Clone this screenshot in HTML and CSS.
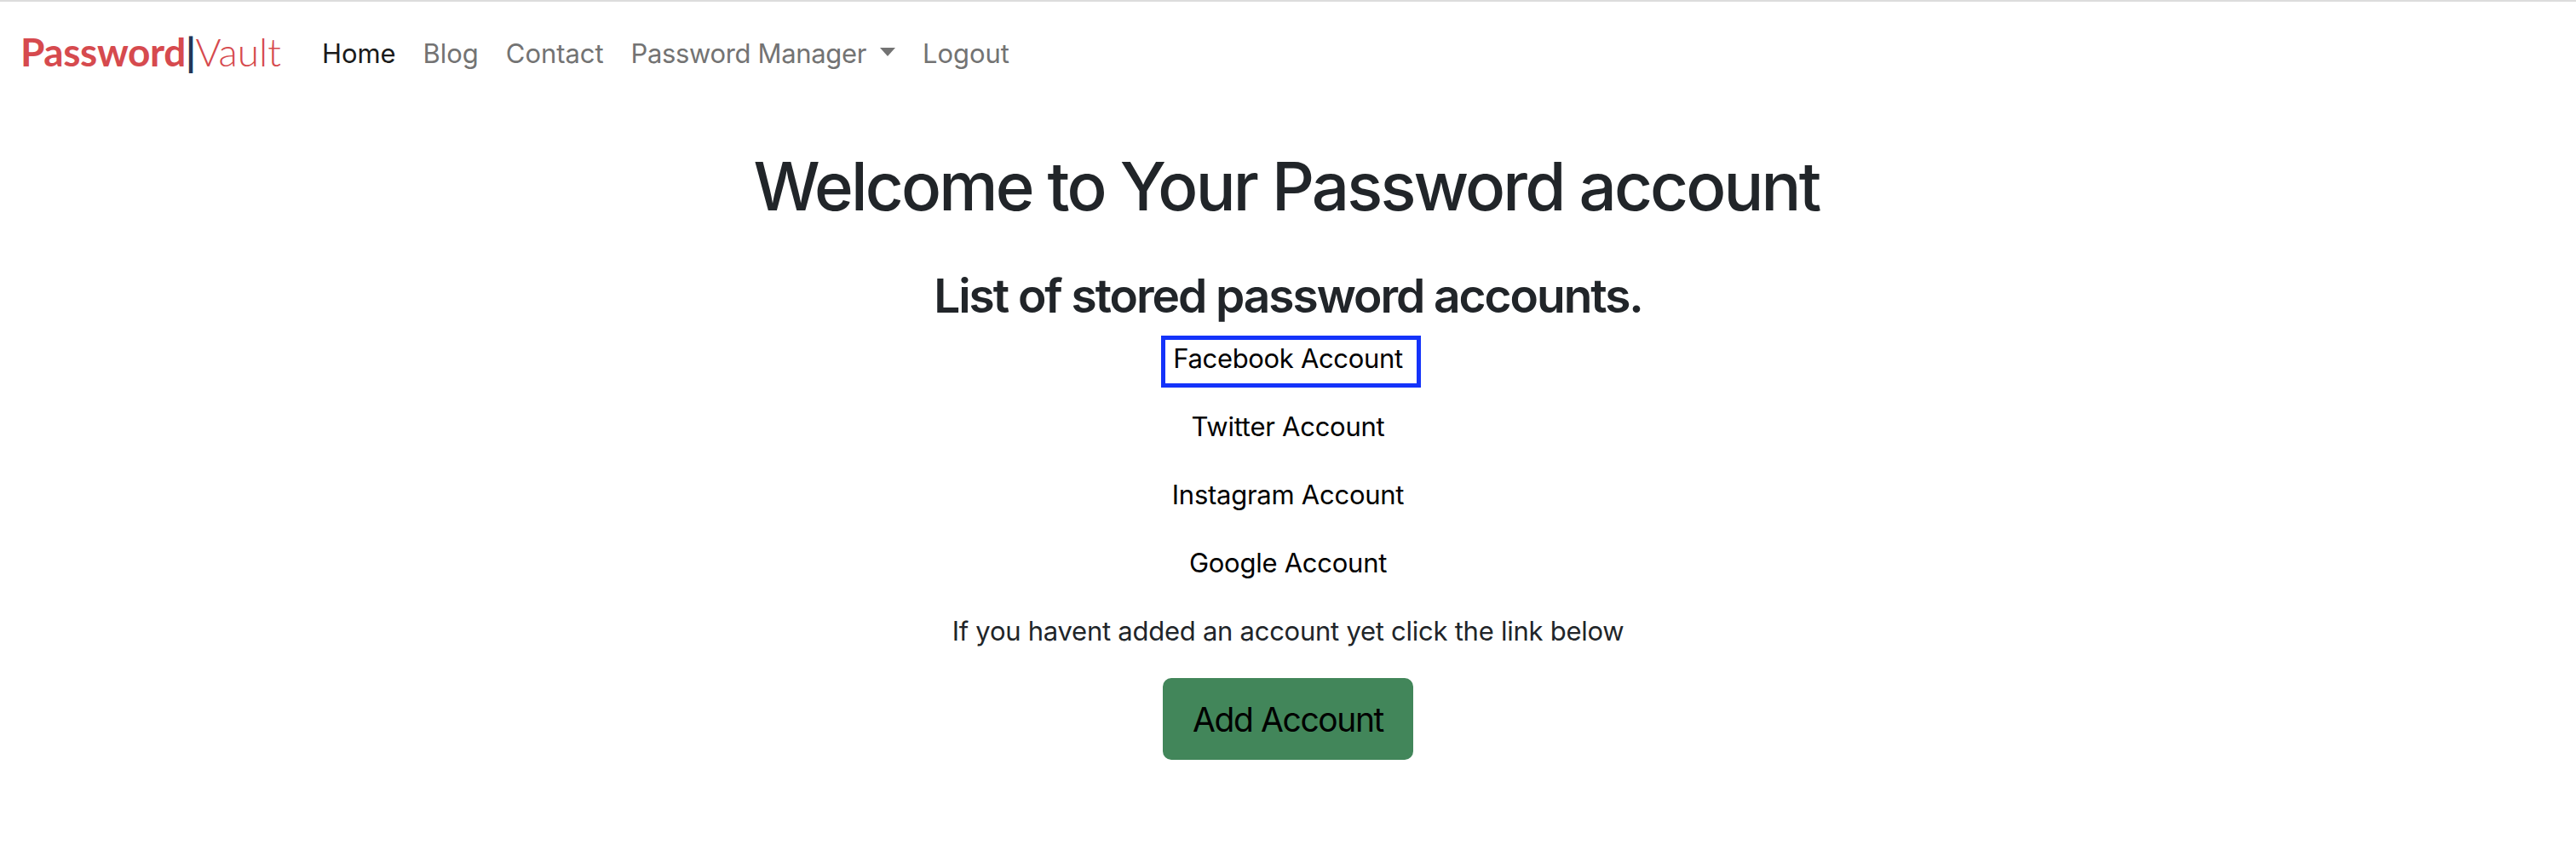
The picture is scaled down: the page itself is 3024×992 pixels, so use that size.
FILE: index.html
```html
<!DOCTYPE html>
<html lang="en">
<head>
<meta charset="utf-8">
<title>Password Vault</title>
<link rel="stylesheet" href="styles.css">
</head>
<body>
<header class="navbar">
  <a class="brand"><span class="brand-bold">Password</span><span class="brand-bar">|</span><span class="brand-light">Vault</span></a>
  <nav class="nav">
    <a class="nav-link active">Home</a>
    <a class="nav-link">Blog</a>
    <a class="nav-link">Contact</a>
    <a class="nav-link dropdown">Password Manager<i class="caret"></i></a>
    <a class="nav-link">Logout</a>
  </nav>
</header>
<main class="content">
  <h1 class="title">Welcome to Your Password account</h1>
  <h2 class="subtitle">List of stored password accounts.</h2>
  <ul class="accounts">
    <li class="account selected">Facebook Account</li>
    <li class="account">Twitter Account</li>
    <li class="account">Instagram Account</li>
    <li class="account">Google Account</li>
  </ul>
  <p class="hint">If you havent added an account yet click the link below</p>
  <a class="button">Add Account</a>
</main>
</body>
</html>
```
FILE: styles.css
```css
*,
*::after {
  box-sizing: border-box;
}

body {
  margin: 0;
  background: #fff;
  color: #212529;
  font-family: Inter, "Liberation Sans", sans-serif;
  font-size: 31px;
  line-height: 48px;
  letter-spacing: -0.26px;
}

.navbar {
  display: flex;
  align-items: center;
  height: 125px;
  padding: 0 24px 2px;
  border-top: 2px solid #dcdcdc;
}

.brand {
  display: flex;
  align-items: center;
  margin-right: 32px;
  padding-bottom: 4px;
  color: #d64a4e;
  font-family: Lato, sans-serif;
  font-size: 46px;
  line-height: 60px;
  letter-spacing: -0.4px;
}

.brand-bold {
  font-weight: 700;
}

.brand-bar {
  color: #223658;
  font-weight: 700;
}

.brand-light {
  font-weight: 300;
  letter-spacing: 0;
}

.nav {
  display: flex;
  letter-spacing: -0.05px;
}

.nav-link {
  display: flex;
  align-items: center;
  padding: 0 16px;
  color: #737373;
}

.active {
  color: #1a1a1a;
}

.dropdown {
  letter-spacing: -0.35px;
}

.caret {
  margin: 0 0 4px 16px;
  border-top: 10px solid;
  border-right: 9px solid transparent;
  border-left: 9px solid transparent;
}

.content {
  display: flex;
  flex-direction: column;
  align-items: center;
  padding-top: 46px;
}

.title {
  margin: 0 4px 0 0;
  font-size: 78px;
  font-weight: 540;
  line-height: 96px;
  letter-spacing: -2.85px;
}

.subtitle {
  margin: 47px 0 16px;
  font-size: 55px;
  font-weight: 560;
  line-height: 67px;
  letter-spacing: -2.05px;
}

.accounts {
  display: flex;
  flex-direction: column;
  align-items: center;
  margin: 0;
  padding: 0;
  gap: 32px;
  color: #000;
  list-style: none;
}

.account {
  position: relative;
}

.selected {
  letter-spacing: -0.33px;
}

/* Highlight frame drawn around the selected account */
.selected::after {
  content: "";
  position: absolute;
  top: -3px;
  left: -14px;
  width: 305px;
  height: 61px;
  border: 5px solid #1433fa;
}

.hint {
  margin: 32px 0 31px;
}

.button {
  width: 294px;
  height: 96px;
  border-radius: 10px;
  background: #42865a;
  color: #000;
  font-size: 39px;
  line-height: 98px;
  letter-spacing: -1.4px;
  text-align: center;
}
```
